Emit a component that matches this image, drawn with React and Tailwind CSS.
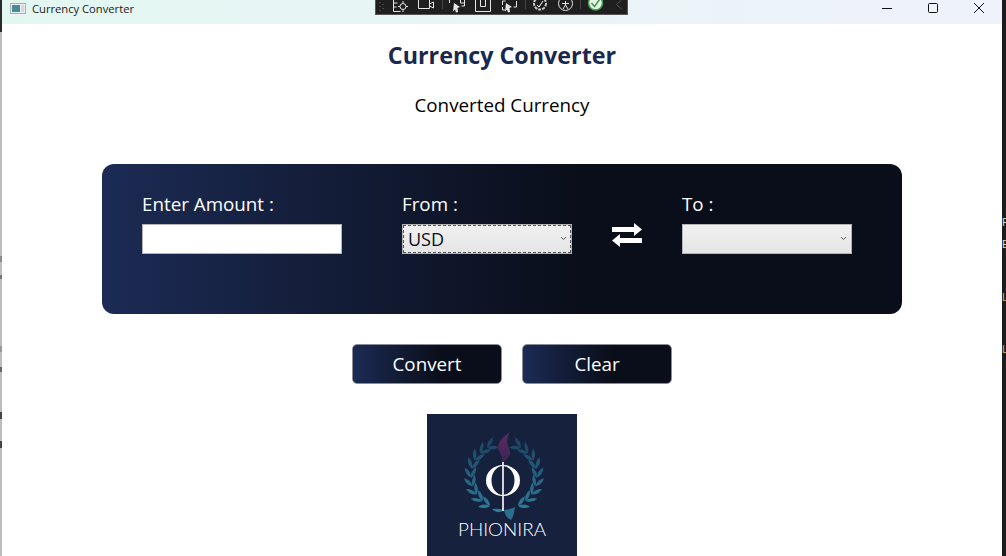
import React from "react";

const sans = "font-['Open_Sans','Noto_Sans',sans-serif]";

// marks on the left window edge, [height, colour]
const edge = [
  [32, "bg-[#2a2a2a]"], [224, "bg-[#bdbdbd]"], [6, "bg-[#8c8c8c]"], [13, "bg-[#bdbdbd]"], [4, "bg-[#777]"],
  [67, "bg-[#bdbdbd]"], [6, "bg-[#999]"], [15, "bg-[#bdbdbd]"], [5, "bg-[#666]"], [40, "bg-[#bdbdbd]"],
  [7, "bg-[#444]"], [22, "bg-[#bdbdbd]"], [7, "bg-[#444]"], [108, "bg-[#bdbdbd]"],
];

function leafPath(bx, by, angle, len, wide) {
  const tx = bx + Math.cos(angle) * len;
  const ty = by + Math.sin(angle) * len;
  const mx = (bx + tx) / 2;
  const my = (by + ty) / 2;
  const nx = -Math.sin(angle) * wide;
  const ny = Math.cos(angle) * wide;
  return `M${bx} ${by}Q${mx + nx} ${my + ny} ${tx} ${ty}Q${mx - nx} ${my - ny} ${bx} ${by}Z`;
}

function wreathPaths() {
  const out = [];
  for (let i = 0; i < 9; i++) {
    const th = ((115 + i * 15.5) * Math.PI) / 180;
    const px = 77 + 33 * Math.cos(th);
    const py = 62 + 33 * Math.sin(th);
    const along = th + Math.PI / 2;
    out.push(leafPath(px, py, along - 0.5, 12, 3.6));
    out.push(leafPath(px, py, along + 0.5, 12, 3.6));
  }
  return out;
}

function Logo() {
  const paths = wreathPaths();
  return (
    <svg width="150" height="142" viewBox="0 0 150 142" className="block">
      <defs>
        <linearGradient id="leaf" gradientUnits="userSpaceOnUse" x1="0" y1="28" x2="0" y2="98">
          <stop offset="0" stopColor="#1c4563" />
          <stop offset="1" stopColor="#2f7f9c" />
        </linearGradient>
        <linearGradient id="flame" x1="0" y1="0" x2="0" y2="1">
          <stop offset="0" stopColor="#5c2c66" />
          <stop offset="1" stopColor="#3a2450" />
        </linearGradient>
      </defs>
      <rect width="150" height="142" fill="#16213d" />
      <g fill="url(#leaf)">
        {paths.map((d, i) => (
          <path key={i} d={d} />
        ))}
      </g>
      <g fill="url(#leaf)" transform="translate(154 0) scale(-1 1)">
        {paths.map((d, i) => (
          <path key={i} d={d} />
        ))}
      </g>
      <path d="M77 96Q70 94 65 95Q70 101 77 96Z" fill="#2f7f9c" />
      <path d="M77 96Q85 95 88 93Q87 102 84 106Q78 103 77 96Z" fill="#2a6f8f" />
      <path d="M83 18C73 25 69 31 72 37C74 41 76 44 75 49C82 45 85 39 82 34C79 29 80 23 83 18Z" fill="url(#flame)" />
      <path fillRule="evenodd" d="M59 66.500a17 15.500 0 1 0 34 0a17 15.500 0 1 0-34 0ZM64.500 66.500a11.500 14.500 0 1 1 23 0a11.500 14.500 0 1 1-23 0Z" fill="#fff" />
      <rect x="75.200" y="48" width="1.600" height="49" fill="#fff" />
      <text x="75" y="122" textAnchor="middle" fontSize="18" fontWeight="300" fill="#fff" fontFamily="Lato, sans-serif" textLength="88" lengthAdjust="spacingAndGlyphs">PHIONIRA</text>
    </svg>
  );
}

function Toolbar() {
  return (
    <div className="absolute left-[375px] top-0 w-[253px] h-[15px] bg-[#1f1f1f] border-x border-b border-[#555] overflow-hidden">
      <svg width="253" height="15" viewBox="375 0 253 15" fill="none" stroke="#e6e6e6" strokeWidth="1" className="block">
        <path d="M379 2v1M382 4v1M379 6v1M382 8v1M379 10v1" stroke="#666" />
        <path d="M392.500 0v11.500h7M392.500 3h4M392.500 7h3" />
        <circle cx="402" cy="6.500" r="3" />
        <path d="M402 1v2M402 10v2M397 6.500h2M405 6.500h2" />
        <path d="M417.500 0v8.500h11v-8.500M428.500 4l4-2v6l-4-2" />
        <path d="M441.500 0v9" stroke="#444" />
        <path d="M448.500 3v-3M463.500 3h-4v-3M463.500 0v6h-3" />
        <path d="M453 3l6 4-2.500 1 .5 4-2 .5-1-3-2 2z" fill="#e6e6e6" stroke="none" />
        <path d="M474.500 0v11.500h15v-11.500" />
        <path d="M479.500 0v6.500h5v-6.500" />
        <path d="M501.500 5v-4h3M515.500 1v6h-3M504 10h-2.500v-3" />
        <path d="M505 3l6 4-2.500 1 .5 4-2 .5-1-3-2 2z" fill="#e6e6e6" stroke="none" />
        <path d="M524.500 0v9" stroke="#444" />
        <circle cx="539" cy="3.500" r="6" strokeWidth="2" stroke="#c8c8c8" strokeDasharray="3 1" />
        <path d="M536 5l2 2 4-6" stroke="#fff" />
        <circle cx="564.500" cy="3.500" r="7" />
        <path d="M564.500 1v4M561 3.500h7M564.500 5l-2.500 4M564.500 5l2.500 4" />
        <path d="M579.500 0v9" stroke="#444" />
        <circle cx="594.500" cy="3" r="7" stroke="#3fa34d" strokeWidth="1.500" fill="#e9f3e9" />
        <path d="M590.500 3l3 3.500 5-7" stroke="#2f9e44" strokeWidth="1.500" />
        <path d="M620.500 0l-5 4.500 5 4.500" stroke="#555" />
      </svg>
    </div>
  );
}

function Chevron() {
  return (
    <svg width="7" height="5" viewBox="0 0 7 5" fill="none" stroke="#555" strokeWidth="1" className="absolute right-[5px] top-[12px] pointer-events-none">
      <path d="M1 1l2.500 2.500 2.500-2.500" />
    </svg>
  );
}

function CurrencySelect({ value, focused }) {
  return (
    <div className="relative w-[170px] h-[30px]">
      <select
        defaultValue={value}
        className={`block w-full h-full appearance-none border border-[#b4b4b4] bg-gradient-to-b from-[#f0f0f0] to-[#e5e5e5] text-[#0a0e1a] text-[18px] leading-none pl-[5px] rounded-none ${sans} ${focused ? "outline-1 outline-dashed outline-[#555] -outline-offset-2" : "outline-none"}`}
      >
        <option value=""></option>
        <option value="USD">USD</option>
      </select>
      <Chevron />
    </div>
  );
}

function Field({ label, className, children }) {
  return (
    <div className={`flex flex-col ${className}`}>
      <label className="text-white text-[18.800px] leading-[20px] mb-[10px]">{label}</label>
      {children}
    </div>
  );
}

export default function App() {
  return (
    <div className={`relative flex w-[1006px] h-[556px] overflow-hidden bg-white ${sans}`}>
      <div className="flex flex-col w-[2px]">
        {edge.map(([h, c], i) => (
          <div key={i} className={c} style={{ height: h }}></div>
        ))}
      </div>

      <div className="flex flex-col w-[1000px]">
        <div className="flex items-start h-[24px] shrink-0 bg-gradient-to-r from-[#e3f7f1] to-[#eff2fb]">
          <svg width="16" height="11" viewBox="0 0 16 11" className="ml-[8px] mr-[6px] mt-[3px]">
            <rect x="0.500" y="0.500" width="15" height="10" fill="#eef0f4" stroke="#a8adb5" />
            <rect x="2" y="2" width="8" height="7" fill="#4a8a96" />
            <rect x="11" y="2" width="3" height="7" fill="#d5d8de" />
          </svg>
          <span className="text-[11.200px] leading-[18px] text-[#1a1a1a]">Currency Converter</span>
          <div className="ml-auto flex items-center text-black">
            <svg width="46" height="24" viewBox="0 0 46 24" fill="none" stroke="#111"><path d="M18 8.500h10" /></svg>
            <svg width="46" height="24" viewBox="0 0 46 24" fill="none" stroke="#111"><rect x="18.500" y="3.500" width="9" height="9" rx="1" /></svg>
            <svg width="46" height="24" viewBox="0 0 46 24" fill="none" stroke="#111"><path d="M18 3l10 10M28 3l-10 10" /></svg>
          </div>
        </div>

        <div className="flex flex-col items-center">
          <h1 className="mt-[13px] h-[36px] leading-[36px] text-[23.300px] font-bold text-[#1a2850]">Currency Converter</h1>
          <p className="mt-[18px] h-[28px] leading-[28px] text-[18.800px] text-black">Converted Currency</p>

          <div className="mt-[45px] w-[800px] h-[150px] rounded-[12px] bg-gradient-to-r from-[#1c2b55] via-[#0a0e1a] via-60% to-[#0a0e1a] flex items-start pl-[40px] pt-[30px]">
            <Field label="Enter Amount :" className="w-[200px] mr-[60px]">
              <input type="text" className="block w-[200px] h-[30px] bg-white border border-[#b4b4b4] outline-none" />
            </Field>
            <Field label="From :" className="w-[170px] mr-[40px]">
              <CurrencySelect value="USD" focused />
            </Field>
            <svg width="30" height="24" viewBox="0 0 30 24" fill="#fff" className="mt-[29px] mr-[40px]">
              <path d="M0 4h22V0l8 6.500-8 6.500V9H0z" />
              <path d="M30 15H8v-4L0 17.500 8 24v-4h22z" />
            </svg>
            <Field label="To :" className="w-[170px]">
              <CurrencySelect value="" />
            </Field>
          </div>

          <div className="mt-[30px] ml-[20px] flex gap-[20px]">
            <button className="w-[150px] h-[40px] rounded-[5px] border border-[#8a8d96] bg-gradient-to-r from-[#1c2b55] to-[#0a0e1a] to-60% text-white text-[18.800px]">Convert</button>
            <button className="w-[150px] h-[40px] rounded-[5px] border border-[#8a8d96] bg-gradient-to-r from-[#1c2b55] to-[#0a0e1a] to-60% text-white text-[18.800px]">Clear</button>
          </div>

          <div className="mt-[30px]">
            <Logo />
          </div>
        </div>
      </div>

      <div className="w-[4px] bg-[#1c1c1c] overflow-hidden font-['Liberation_Sans',sans-serif] text-[11px] leading-[11px]">
        <div className="mt-[217px] text-[#d8d8d8]">F</div>
        <div className="mt-[11px] text-[#d8d8c8]">E</div>
        <div className="mt-[42px] text-[#d8b060]">L</div>
        <div className="mt-[41px] text-[#d8b060]">L</div>
      </div>

      <Toolbar />
    </div>
  );
}
